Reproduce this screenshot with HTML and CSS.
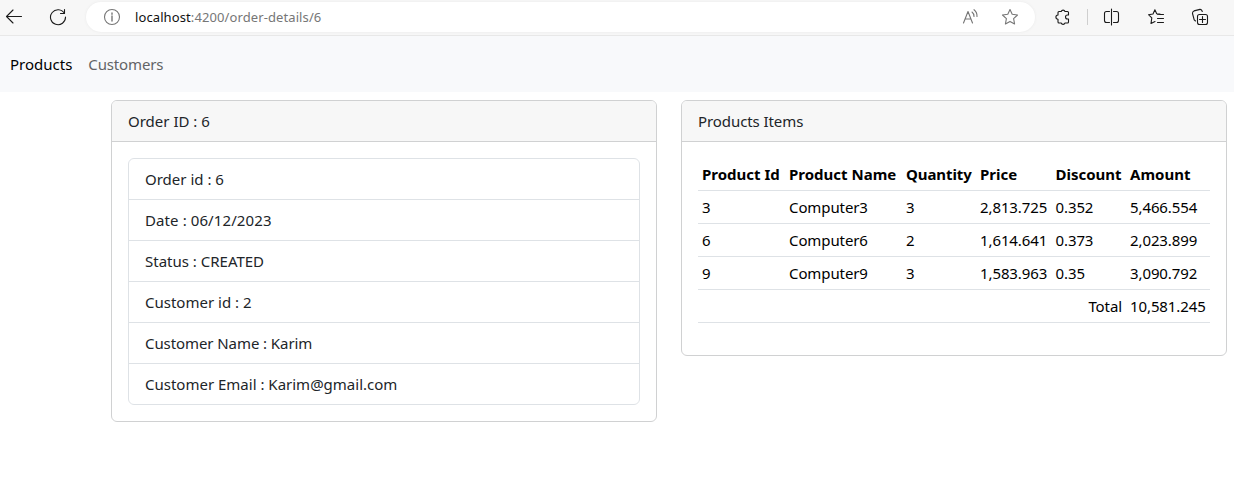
FILE: index.html
```html
<!DOCTYPE html>
<html lang="en">
<head>
<meta charset="utf-8">
<title>Order details</title>
<link rel="stylesheet" href="styles.css">
</head>
<body>
<header class="toolbar">
  <svg class="icon back" viewBox="0 0 18 18"><path d="M16.500 8.500H1.500M8 2L1.500 8.500L8 15"/></svg>
  <svg class="icon reload" viewBox="0 0 18 18"><path d="M15.500 5.500A7.500 7.500 0 1 0 16.500 9M15.500 1.500V5.500H11.500"/></svg>
  <div class="address">
    <svg class="icon info" viewBox="0 0 18 18"><circle cx="9" cy="9" r="7.500"/><path d="M9 8V13M9 5V6.300" stroke-width="1.400"/></svg>
    <span class="url"><span class="host">localhost</span>:4200/order-details/6</span>
    <svg class="icon read" viewBox="0 0 18 18"><path d="M1.500 15L6 3.500L10.500 15M3.100 11H8.900M10 4Q12 5.500 12 8.500M12 1.700Q15.200 4 15 8.500"/></svg>
    <svg class="icon star" viewBox="0 0 18 18"><path d="M9 1.500L11.200 6.300L16.500 7L12.600 10.700L13.600 16L9 13.400L4.400 16L5.400 10.700L1.500 7L6.800 6.300Z"/></svg>
  </div>
  <svg class="icon puzzle" viewBox="0 0 18 18"><path d="M5 3.500H7.200A2 2 0 0 1 11 3.500H13.500Q14.500 3.500 14.500 4.500V7H13.500A1.900 1.900 0 0 0 13.500 11H14.500V14Q14.500 15 13.500 15H11A2 2 0 0 1 7.200 15H5Q4 15 4 14V11.200A2.100 2.100 0 0 1 4 7V4.500Q4 3.500 5 3.500Z"/></svg>
  <span class="divider"></span>
  <svg class="icon split" viewBox="0 0 18 18"><path d="M6.500 3.500H3.500Q1.500 3.500 1.500 5.500V12.500Q1.500 14.500 3.500 14.500H6.500M10.500 3.500H13.500Q15.500 3.500 15.500 5.500V12.500Q15.500 14.500 13.500 14.500H10.500M8.500 1V17"/></svg>
  <svg class="icon favorites" viewBox="0 0 18 18"><path d="M13 6L9.700 5.800L7.900 1.800L6 6L1.500 6.700L4.800 9.800L4 15.500L8 13.500M10.500 6.500H16.500M10.500 10.500H16.500M10.500 14.500H16.500"/></svg>
  <svg class="icon collections" viewBox="0 0 18 18"><rect x="6.500" y="6.500" width="10" height="10" rx="2"/><path d="M11.500 8.500V14.500M8.500 11.500H14.500M4.500 13L3.200 11.800L1.500 5.500Q1.300 3.500 3 2.900L9 1.400Q10.700 1.200 11.300 3.500"/></svg>
</header>
<nav class="navbar">
  <a class="nav-link active">Products</a>
  <a class="nav-link customers">Customers</a>
</nav>
<main class="row">
  <section class="card">
    <div class="card-header">Order ID : 6</div>
    <div class="card-body">
      <ul class="list">
        <li>Order id : 6</li>
        <li class="date">Date : 06/12/2023</li>
        <li>Status : CREATED</li>
        <li>Customer id : 2</li>
        <li class="snug">Customer Name : Karim</li>
        <li>Customer Email : Karim@gmail.com</li>
      </ul>
    </div>
  </section>
  <section class="card">
    <div class="card-header snug">Products Items</div>
    <div class="card-body">
      <table class="items">
        <colgroup><col class="c-id"><col class="c-name"><col class="c-qty"><col class="c-price"><col class="c-disc"><col class="c-amount"></colgroup>
        <thead><tr><th>Product Id</th><th>Product Name</th><th class="snug">Quantity</th><th>Price</th><th>Discount</th><th>Amount</th></tr></thead>
        <tbody>
          <tr><td>3</td><td>Computer3</td><td>3</td><td>2,813.725</td><td>0.352</td><td>5,466.554</td></tr>
          <tr><td>6</td><td>Computer6</td><td>2</td><td>1,614.641</td><td>0.373</td><td>2,023.899</td></tr>
          <tr><td>9</td><td>Computer9</td><td>3</td><td>1,583.963</td><td>0.35</td><td>3,090.792</td></tr>
          <tr><td colspan="5" class="total">Total</td><td>10,581.245</td></tr>
        </tbody>
      </table>
    </div>
  </section>
</main>
</body>
</html>
```
FILE: styles.css
```css
* { box-sizing: border-box; }
body {
  margin: 0;
  background: #fff;
  color: #212529;
  font: 15px/24px "Noto Sans", "Open Sans", sans-serif;
}
.toolbar {
  display: flex;
  align-items: center;
  height: 36px;
  padding: 0 0 2px 5px;
  background: #f7f7f7;
  border-bottom: 1px solid #e8e8e8;
}
.icon {
  flex: none;
  width: 18px;
  height: 18px;
  fill: none;
  stroke: #1b1b1b;
  stroke-width: 1.1;
  stroke-linecap: round;
  stroke-linejoin: round;
}
.reload { margin-left: 26px; }
.address {
  display: flex;
  align-items: center;
  width: 949px;
  height: 30px;
  margin-left: 19px;
  padding: 0 16px 0 17px;
  border-radius: 15px;
  background: #fff;
  box-shadow: 0 0 3px #e9e9e9;
}
.address .icon { stroke: #767676; }
.url {
  flex: 1;
  margin-left: 14px;
  color: #767676;
  font-size: 13px;
  letter-spacing: 0.1px;
}
.host { color: #111; }
.star { margin-left: 21px; }
.puzzle { margin-left: 19px; }
.divider { width: 1px; height: 16px; margin-left: 15px; background: #cfcfcf; }
.split { margin-left: 15px; }
.favorites { margin-left: 26px; }
.collections { margin-left: 26px; }
.navbar {
  display: flex;
  align-items: center;
  gap: 16px;
  height: 56px;
  padding-left: 10px;
  background: #f8f9fb;
}
.nav-link { color: #626466; }
.nav-link.active { color: #000; }
.customers { letter-spacing: -0.15px; }
.row {
  display: flex;
  align-items: flex-start;
  gap: 24px;
  padding: 8px 7px 0 111px;
}
.card {
  width: 546px;
  border: 1px solid #d0d1d2;
  border-radius: 6px;
  overflow: hidden;
}
.card-header {
  padding: 8px 16px;
  background: #f7f7f7;
  border-bottom: 1px solid #d0d1d2;
}
.card-body { padding: 16px; }
.list {
  margin: 0;
  padding: 0;
  list-style: none;
  border: 1px solid #dee2e6;
  border-radius: 6px;
}
.list li { padding: 8px 16px; }
.list li + li { border-top: 1px solid #dee2e6; }
.date { letter-spacing: 0.1px; }
.snug { letter-spacing: -0.08px; }
.items {
  width: 512px;
  margin-bottom: 16px;
  table-layout: fixed;
  border-collapse: separate;
  border-spacing: 0;
  color: #000;
}
.items th, .items td {
  height: 33px;
  padding: 4px;
  border-bottom: 1px solid #dee2e6;
  text-align: left;
  white-space: nowrap;
}
.items td { letter-spacing: -0.1px; }
.items .total { text-align: right; }
.c-id { width: 87px; }
.c-name { width: 117px; }
.c-qty { width: 74px; }
.c-price { width: 75.5px; }
.c-disc { width: 74.5px; }
.c-amount { width: 84px; }
```
